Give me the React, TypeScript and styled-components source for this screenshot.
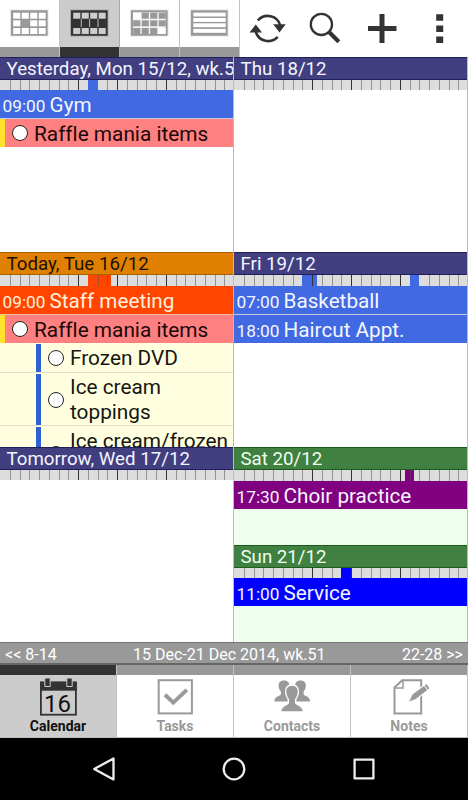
import React from "react";
import styled, { createGlobalStyle } from "styled-components";

const GlobalStyle = createGlobalStyle`
  * { box-sizing: border-box; }
  body {
    margin: 0;
    background: #000;
    font-family: Roboto, "Liberation Sans", sans-serif;
    font-variant-ligatures: none;
  }
`;

const Screen = styled.div`
  width: 468px;
  height: 800px;
  display: flex;
  flex-direction: column;
  overflow: hidden;
  background: #fff;
`;

const TopBar = styled.header`
  height: 57px;
  flex: none;
  display: flex;
`;

const ViewTab = styled.div<{ $active?: boolean }>`
  width: 60px;
  height: 57px;
  display: flex;
  flex-direction: column;
  border-right: 1px solid ${(p) => (p.$active ? "#aaa" : "#c4c4c4")};
  background: ${(p) => (p.$active ? "#ccc" : "#fff")};
  svg { display: block; }
  &::after {
    content: "";
    height: 10px;
    background: ${(p) => (p.$active ? "#333" : "#999")};
  }
`;

const Actions = styled.div`
  flex: 1;
  display: flex;
  svg { display: block; }
`;

const Week = styled.main`
  height: 585px;
  flex: none;
  display: grid;
  grid-template-columns: 234px 234px;
`;

const Column = styled.div`
  display: flex;
  flex-direction: column;
  min-width: 0;
`;

const DayBox = styled.section<{ $height: number; $bg?: string }>`
  height: ${(p) => p.$height}px;
  flex: none;
  overflow: hidden;
  background: ${(p) => p.$bg ?? "#fff"};
  border-right: 1px solid #bbb;
`;

type Tone = "navy" | "orange" | "green";
const tones: Record<Tone, { bg: string; edge: string; text: string }> = {
  navy: { bg: "#413f80", edge: "#1f1f5c", text: "#f4f4ff" },
  orange: { bg: "#e08000", edge: "#a86000", text: "#1c1000" },
  green: { bg: "#408040", edge: "#1c5c1c", text: "#f0fff0" },
};

const DayHeader = styled.h2<{ $tone: Tone }>`
  margin: 0 -1px 0 0;
  height: 23px;
  padding-left: 6.5px;
  border-top: 1px solid ${(p) => tones[p.$tone].edge};
  border-bottom: 1px solid ${(p) => tones[p.$tone].edge};
  background: ${(p) => tones[p.$tone].bg};
  color: ${(p) => tones[p.$tone].text};
  font-size: 18.7px;
  font-weight: 400;
  line-height: 23px;
  white-space: nowrap;
`;

const Hours = styled.div<{ $height: number }>`
  position: relative;
  height: ${(p) => p.$height}px;
  margin-right: -1px;
  background: #ddd;
  display: flex;
`;

const Hour = styled.i<{ $strong: boolean; $hidden: boolean }>`
  position: relative;
  flex: 1 1 0;
  border-left: 1px solid ${(p) => (p.$hidden ? "transparent" : p.$strong ? "#333" : "rgba(80,80,80,.52)")};
`;

const Busy = styled.b<{ $from: number; $to: number; $color: string }>`
  position: absolute;
  top: 0;
  bottom: 0;
  left: ${(p) => Math.round(p.$from * 9.75)}px;
  width: ${(p) => Math.round(p.$to * 9.75) - Math.round(p.$from * 9.75)}px;
  background: ${(p) => p.$color};
`;

const Event = styled.div<{ $color: string; $text?: string }>`
  height: 28px;
  padding-left: 2.5px;
  background: ${(p) => p.$color};
  color: ${(p) => p.$text ?? "#f4f6ff"};
  font-size: 20.7px;
  line-height: 30px;
  white-space: nowrap;
`;

const Time = styled.time`
  font-size: 17.3px;
  margin-right: 4px;
`;

const Divider = styled.div<{ $color?: string }>`
  height: 1px;
  background: ${(p) => p.$color ?? "#c4cbe2"};
`;

const Task = styled.div`
  height: 28px;
  display: flex;
  align-items: center;
  background: #ff8080;
  border-left: 5px solid #ffe22e;
  padding-left: 7px;
  color: #1a0808;
  font-size: 20.8px;
  white-space: nowrap;
`;

const TaskName = styled.span`
  padding-top: 2px;
`;

const Bullet = styled.span`
  width: 16px;
  height: 16px;
  flex: none;
  border: 1.5px solid #222;
  border-radius: 50%;
  background: #fff;
  margin-right: 6px;
`;

const SubTask = styled.div<{ $height: number }>`
  height: ${(p) => p.$height}px;
  display: flex;
  background: #ffffe0;
  border-bottom: 1px solid #e2e2cc;
  padding-left: 36px;
`;

const SubBody = styled.div`
  flex: 1;
  display: flex;
  align-items: center;
  border-left: 5px solid #2c62d4;
  margin-top: 1px;
  padding-left: 7px;
  color: #161610;
  font-size: 20.8px;
  line-height: 25px;
  white-space: nowrap;
`;

const SubName = styled.span<{ $lines?: number }>`
  height: ${(p) => (p.$lines ?? 1) * 25}px;
`;

const WeekBar = styled.nav`
  height: 23px;
  flex: none;
  display: flex;
  justify-content: space-between;
  padding: 0 5px;
  background: #999;
  border-top: 1px solid #777;
  border-bottom: 2px solid #666;
  color: #fff;
  font-size: 16px;
  line-height: 23px;
`;

const BottomTabs = styled.nav`
  height: 73px;
  flex: none;
  display: grid;
  grid-template-columns: repeat(4, 117px);
`;

const BottomTab = styled.div<{ $active?: boolean }>`
  border-right: 1px solid #c4c4c4;
  border-bottom: 1px solid #bbb;
  background: ${(p) => (p.$active ? "#ccc" : "#fff")};
  color: ${(p) => (p.$active ? "#111" : "#999")};
  display: flex;
  flex-direction: column;
  align-items: center;
  font-size: 14px;
  font-weight: 700;
  line-height: 16px;
  &::before {
    content: "";
    width: 100%;
    height: 10px;
    background: ${(p) => (p.$active ? "#333" : "#999")};
  }
  svg { display: block; margin: 2px 0; }
`;

const SystemBar = styled.footer`
  height: 62px;
  flex: none;
  background: #000;
  display: flex;
  justify-content: space-between;
  align-items: center;
  padding: 0 91px;
`;

function Grid({ kind }: { kind: "day" | "week" | "month" | "list" }) {
  const ink = kind === "week" ? "#333" : "#999";
  const paper = kind === "week" ? "#ccc" : "#fff";
  const xs = [13, 21.5, 30, 38.5];
  const ys = [12.7, 20.3, 28];
  const filled = (r: number, c: number) =>
    (kind === "day" && r === 1 && c === 1) ||
    (kind === "month" && !(r === 0 && c === 0) && !(r === 2 && c === 3)) ||
    (kind === "week" && r === 1);
  return (
    <svg width="59" height="47">
      <rect x="10" y="9.5" width="38.5" height="27" fill={ink} opacity=".25" />
      <rect x="11" y="10.3" width="36.6" height="25.4" fill={ink} />
      {kind === "list" &&
        [12.6, 18, 23.3, 28.9].map((y) => <rect key={y} x="13.3" y={y} width="32.4" height="3.9" fill={paper} />)}
      {kind === "month" && <rect x="13" y="12.3" width="32.6" height="21.7" fill="#f4f4f4" />}
      {kind !== "list" &&
        ys.map((y, r) =>
          xs.map((x, c) => (
            <rect key={`${r}${c}`} x={x + 0.2} y={y} width={c === 3 ? 7 : 7.1} height="6" fill={filled(r, c) ? ink : paper} />
          )),
        )}
      {kind === "week" && [21, 29.3, 37.7].map((x) => <rect key={x} x={x - 0.2} y="19" width="1" height="8" fill="#bbb" />)}
    </svg>
  );
}

function ActionIcons() {
  return (
    <svg width="228" height="57" fill="none" stroke="#333">
      <path d="M17.9 20.5A13 13 0 0 1 40.3 25.5M37.7 36.9A13 13 0 0 1 15.8 32" strokeWidth="2.6" />
      <path d="M33.2 24.2H45.7L39.5 32.4ZM9.5 32.6L15.8 24.4L22 32.6Z" fill="#333" stroke="none" />
      <circle cx="81.4" cy="24.4" r="10.6" strokeWidth="2.3" />
      <path d="M88.8 31.8L98.8 41.8" strokeWidth="4.2" />
      <path d="M142 14V43M128 28.4H156.5" strokeWidth="5" />
      <path d="M196.2 14.3h7v6.4h-7zM196.2 25.5h7v6.4h-7zM196.2 36.6h7v6.4h-7z" fill="#333" stroke="none" />
    </svg>
  );
}

function CalendarIcon() {
  return (
    <svg width="40" height="39">
      <rect x="2.9" y="5.5" width="35" height="32.2" fill="none" stroke="#333" strokeWidth="1.8" />
      <rect x="2" y="4.7" width="36.8" height="9" fill="#333" />
      <path d="M6.8 1H12.2V9.5H6.8ZM28.8 1H34.2V9.5H28.8Z" fill="#333" stroke="#ccc" strokeWidth="1" />
      <text x="19.6" y="34.6" textAnchor="middle" fontFamily="Roboto" fontSize="24" fontWeight="400" fill="#111">16</text>
    </svg>
  );
}

function TasksIcon() {
  return (
    <svg width="40" height="39" fill="none" stroke="#999">
      <rect x="3.7" y="3.2" width="33.2" height="33.2" strokeWidth="2" />
      <path d="M10 17.7L18.3 25.6L31.8 12.9" strokeWidth="4" />
    </svg>
  );
}

function ContactsIcon() {
  const person = "M17.5 3C12.7 3 10.6 6.2 11.2 11C11.6 14.3 12.8 16 13.8 17.4V21C12.8 23.3 6.3 22.8 6 30H29C28.7 22.8 22.2 23.3 21.2 21V17.4C22.2 16 23.4 14.3 23.8 11C24.4 6.2 22.3 3 17.5 3Z";
  return (
    <svg width="40" height="39" fill="#999">
      <path transform="translate(-2.7 1.3) scale(.84 .77)" d={person} />
      <path transform="translate(13.8 1.3) scale(.84 .77)" d={person} />
      <path transform="translate(2.5 5)" d={person} stroke="#fff" strokeWidth="1.4" />
    </svg>
  );
}

function NotesIcon() {
  return (
    <svg width="40" height="39" fill="none" stroke="#999">
      <path d="M13.2 3.2H32.2V36.4H5.5V10.5Z" strokeWidth="2" />
      <path d="M14 4V11H6" strokeWidth="1.5" />
      <path d="M19 25.6L23.2 17.1L37.6 6.2L41.4 11.4L27 22.4Z" fill="#999" stroke="#fff" strokeWidth="1.1" />
      <path d="M35 8L38.8 13.2" stroke="#fff" strokeWidth="1" />
    </svg>
  );
}

interface BusySpan { from: number; to: number; color: string }

function HourStrip({ busy = [], height = 10 }: { busy?: BusySpan[]; height?: number }) {
  return (
    <Hours $height={height}>
      {busy.map((b) => <Busy key={b.from} $from={b.from} $to={b.to} $color={b.color} />)}
      {Array.from({ length: 24 }, (_, h) => (
        <Hour
          key={h}
          $strong={h === 8 || h === 12 || h === 17}
          $hidden={h === 0 || busy.some((b) => h === b.from || (h === b.to && h !== 12))}
        />
      ))}
    </Hours>
  );
}

interface DayProps {
  title: string;
  tone?: Tone;
  height?: number;
  bg?: string;
  busy?: BusySpan[];
  strip?: number;
  children?: React.ReactNode;
}

function Day({ title, tone = "navy", height = 195, bg, busy, strip, children }: DayProps) {
  return (
    <DayBox $height={height} $bg={bg}>
      <DayHeader $tone={tone}>{title}</DayHeader>
      <HourStrip busy={busy} height={strip} />
      {children}
    </DayBox>
  );
}

const BLUE = "#4169e1";

export default function App() {
  return (
    <Screen>
      <GlobalStyle />
      <TopBar>
        <ViewTab><Grid kind="day" /></ViewTab>
        <ViewTab $active><Grid kind="week" /></ViewTab>
        <ViewTab><Grid kind="month" /></ViewTab>
        <ViewTab><Grid kind="list" /></ViewTab>
        <Actions><ActionIcons /></Actions>
      </TopBar>
      <Week>
        <Column>
          <Day title="Yesterday, Mon 15/12, wk.5" busy={[{ from: 9, to: 10, color: BLUE }]}>
            <Event $color={BLUE}><Time>09:00</Time>Gym</Event>
            <Divider />
            <Task><Bullet /><TaskName>Raffle mania items</TaskName></Task>
          </Day>
          <Day title="Today, Tue 16/12" tone="orange" strip={11} bg="#ffffe0" busy={[{ from: 9, to: 11.4, color: "#ff4500" }]}>
            <Event $color="#ff4500" $text="#fff0dc"><Time>09:00</Time>Staff meeting</Event>
            <Divider $color="#e8c4a0" />
            <Task><Bullet /><TaskName>Raffle mania items</TaskName></Task>
            <SubTask $height={30}><SubBody><Bullet /><SubName>Frozen DVD</SubName></SubBody></SubTask>
            <SubTask $height={53}><SubBody><Bullet /><SubName $lines={2}>Ice cream<br />toppings</SubName></SubBody></SubTask>
            <SubTask $height={55}><SubBody><Bullet /><SubName $lines={2}>Ice cream/frozen</SubName></SubBody></SubTask>
          </Day>
          <Day title="Tomorrow, Wed 17/12" />
        </Column>
        <Column>
          <Day title="Thu 18/12" />
          <Day title="Fri 19/12" strip={11} busy={[{ from: 7, to: 8.5, color: BLUE }, { from: 18, to: 19, color: BLUE }]}>
            <Event $color={BLUE}><Time>07:00</Time>Basketball</Event>
            <Divider />
            <Event $color={BLUE}><Time>18:00</Time>Haircut Appt.</Event>
          </Day>
          <Day title="Sat 20/12" tone="green" height={98} bg="#eeffee" strip={11} busy={[{ from: 17.5, to: 18.5, color: "#800080" }]}>
            <Event $color="#800080"><Time>17:30</Time>Choir practice</Event>
          </Day>
          <Day title="Sun 21/12" tone="green" height={97} bg="#eeffee" busy={[{ from: 11, to: 12, color: "#0000ff" }]}>
            <Event $color="#0000ff"><Time>11:00</Time>Service</Event>
          </Day>
        </Column>
      </Week>
      <WeekBar>
        <span>&lt;&lt; 8-14</span>
        <span>15 Dec-21 Dec 2014, wk.51</span>
        <span>22-28 &gt;&gt;</span>
      </WeekBar>
      <BottomTabs>
        <BottomTab $active><CalendarIcon />Calendar</BottomTab>
        <BottomTab><TasksIcon />Tasks</BottomTab>
        <BottomTab><ContactsIcon />Contacts</BottomTab>
        <BottomTab><NotesIcon />Notes</BottomTab>
      </BottomTabs>
      <SystemBar>
        <svg width="26" height="26" fill="none" stroke="#eee" strokeWidth="2.3" strokeLinejoin="round"><path d="M3.2 13L22.5 2.5V23.5Z" /></svg>
        <svg width="26" height="26" fill="none" stroke="#eee" strokeWidth="2.3"><circle cx="13" cy="13" r="10.3" /></svg>
        <svg width="26" height="26" fill="none" stroke="#eee" strokeWidth="2.3" strokeLinejoin="round"><rect x="3.6" y="3.6" width="18.8" height="18.8" /></svg>
      </SystemBar>
    </Screen>
  );
}
